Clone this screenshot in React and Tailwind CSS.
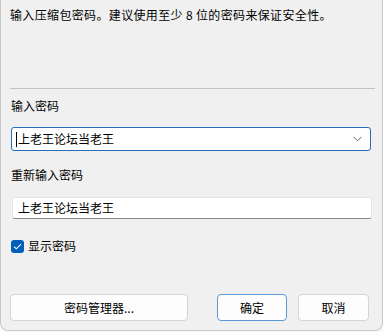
import React from 'react';

const font = "font-['Microsoft_YaHei','Noto_Sans_CJK_SC',sans-serif]";

const Button = ({ children, primary, className = '' }) => (
  <button
    className={`h-[27px] rounded-[4px] bg-[#fdfdfd] text-[12px] leading-[16px] text-black border ${
      primary ? 'border-[#5a9bd5]' : 'border-[#d4d4d4]'
    } ${className}`}
  >
    {children}
  </button>
);

export default function App() {
  return (
    <div className="w-[383px] h-[332px] bg-[#f9f9f9]">
      <div className={`h-[331px] bg-[#f0f0f0] rounded-b-[8px] border-b border-x border-[#c8c8c8] ${font} text-[12px] leading-[16px] text-black flex flex-col`}>
        <p className="pt-[7px] pl-[9px] tracking-[0.35px]">输入压缩包密码。建议使用至少 8 位的密码来保证安全性。</p>

        <div className="mt-[65px] ml-[9px] mr-[7px] h-px bg-[#c2c2c2]" />

        <label className="mt-[9px] pl-[10px]">输入密码</label>
        <div className="mt-[13px] ml-[10px] w-[360px] h-[24px] bg-white border border-[#2b6cb8] rounded-[3px] flex items-center pl-[4px] pr-[8px]">
          <span className="w-px h-[15px] bg-black" />
          <span className="pl-[1px] flex-1">上老王论坛当老王</span>
          <svg width="9" height="6" viewBox="0 0 9 6" className="text-[#6b6b6b]">
            <path d="M0.5 0.8 L4.5 4.8 L8.5 0.8" fill="none" stroke="currentColor" strokeWidth="1" />
          </svg>
        </div>

        <label className="mt-[16px] pl-[10px]">重新输入密码</label>
        <div className="mt-[14px] ml-[11px] w-[360px] h-[22px] bg-white border border-[#e5e5e5] border-b-[#8a8a8a] rounded-[3px] flex items-center pl-[5px]">
          上老王论坛当老王
        </div>

        <div className="mt-[19px] pl-[10px] flex items-center gap-[4px]">
          <span className="w-[13px] h-[13px] rounded-[3px] bg-[#005fb8] flex items-center justify-center">
            <svg width="9" height="7" viewBox="0 0 9 7">
              <path d="M1 3.6 L3.3 5.8 L8 1.2" fill="none" stroke="white" strokeWidth="1.1" />
            </svg>
          </span>
          <span>显示密码</span>
        </div>

        <div className="mt-[40px] pl-[9px] flex">
          <Button className="w-[178px]">密码管理器...</Button>
          <Button primary className="ml-[29px] w-[70px]">确定</Button>
          <Button className="ml-[11px] w-[71px]">取消</Button>
        </div>
      </div>
    </div>
  );
}
